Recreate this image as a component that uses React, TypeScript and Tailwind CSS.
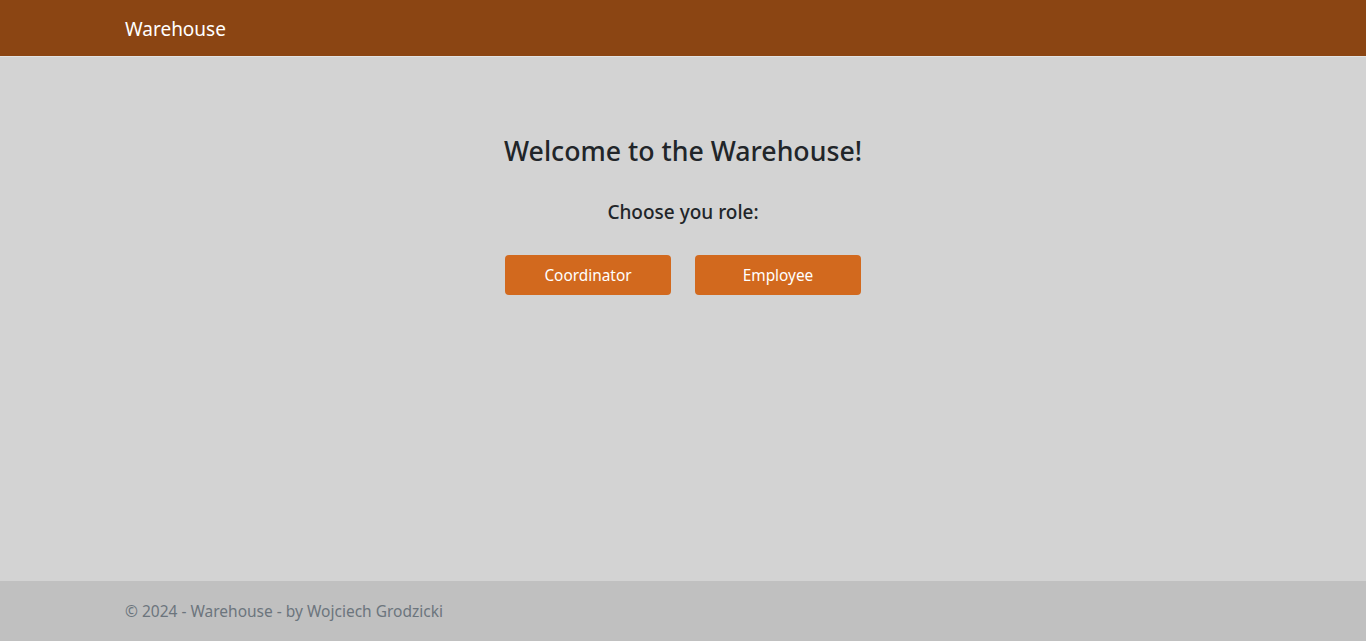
export default function App() {
  return (
    <div className="min-h-[641px] flex flex-col bg-[#d3d3d3] font-['Noto_Sans','Open_Sans',sans-serif] text-[#212529]">
      <header className="h-[57px] bg-[#8b4513] border-b border-[#e2e2e2]">
        <div className="max-w-[1140px] mx-auto px-3 h-full flex items-center">
          <span className="text-white text-[19px] leading-none pt-[3px]">Warehouse</span>
        </div>
      </header>

      <main className="flex-1 flex flex-col items-center pt-[77px]">
        <h3 className="text-[26.7px] font-medium leading-[34px]">Welcome to the Warehouse!</h3>
        <h5 className="mt-8 text-[19px] font-medium leading-6">Choose you role:</h5>
        <div className="mt-[31px] flex gap-6">
          <button className="w-[166px] h-10 pt-[2px] rounded bg-[#d2691e] text-white text-[15.4px]">Coordinator</button>
          <button className="w-[166px] h-10 pt-[2px] rounded bg-[#d2691e] text-white text-[15.4px]">Employee</button>
        </div>
      </main>

      <footer className="h-[60px] bg-[#c0c0c0]">
        <div className="max-w-[1140px] mx-auto px-3 h-full flex items-center pt-[2px]">
          <span className="text-[#6c757d] text-[15.5px]">© 2024 - Warehouse - by Wojciech Grodzicki</span>
        </div>
      </footer>
    </div>
  );
}
